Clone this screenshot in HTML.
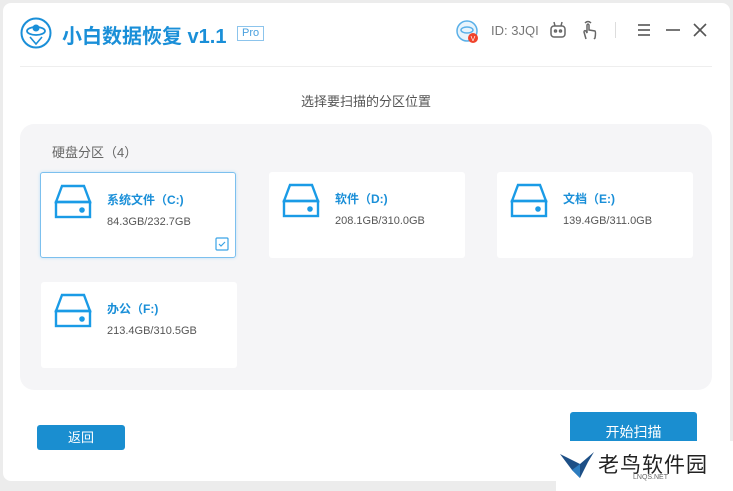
<!DOCTYPE html>
<html><head><meta charset="utf-8"><style>
*{margin:0;padding:0;box-sizing:border-box}
body{width:733px;height:491px;background:#ececec;font-family:"Liberation Sans","Noto Sans CJK SC",sans-serif;position:relative;overflow:hidden}
.win{position:absolute;left:3px;top:3px;width:727px;height:478px;background:#fff;border-radius:8px}
.abs{position:absolute}
.sep{left:20px;top:66px;width:692px;height:1px;background:#eee}
.title{left:62px;top:20px;font-size:20px;font-weight:bold;color:#1a8fd8;white-space:nowrap}
.pro{left:237px;top:26px;border:1px solid #8cc4ec;color:#4aa0de;font-size:11px;line-height:11px;padding:1px 4px}
.panel{left:20px;top:124px;width:692px;height:266px;background:#f5f5f7;border-radius:14px}
.card{position:absolute;width:196px;height:86px;background:#fff;border-radius:3px}
.card.sel{border:1px solid #7cc0ee;box-shadow:0 0 3px #bde0f7}
.card svg{position:absolute;left:13px;top:11px}
.card .n{position:absolute;left:66px;top:18px;font-size:12px;font-weight:bold;color:#1a8fd8;white-space:nowrap}
.card .s{position:absolute;left:66px;top:43px;font-size:11px;color:#555}
.btn{background:#1a8ed0;color:#fff;font-size:13px;text-align:center;border-radius:3px}
</style></head><body>
<div class="win"></div>
<svg class="abs" style="left:20px;top:17px" width="32" height="32" viewBox="0 0 32 32"><circle cx="16" cy="16" r="14.5" fill="#fff" stroke="#1a8fd8" stroke-width="2"/><ellipse cx="16" cy="14" rx="9" ry="4" fill="none" stroke="#1a8fd8" stroke-width="1.8"/><circle cx="16" cy="11" r="3.5" fill="#1a8fd8"/><path d="M10 20 L16 27 L22 20" fill="none" stroke="#1a8fd8" stroke-width="1.6"/></svg>
<div class="abs title">小白数据恢复&nbsp;v1.1</div>
<div class="abs pro">Pro</div>
<svg class="abs" style="left:455px;top:19px" width="30" height="28" viewBox="0 0 30 28"><circle cx="12" cy="12" r="10" fill="#e8f4fc" stroke="#5ab0e8" stroke-width="1.5"/><ellipse cx="12" cy="11" rx="6" ry="3" fill="none" stroke="#5ab0e8" stroke-width="1.5"/><circle cx="18" cy="19" r="5" fill="#f0442c"/><text x="18" y="22" font-size="7" fill="#fff" text-anchor="middle" font-family="Liberation Sans">V</text></svg>
<div class="abs" style="left:491px;top:23px;font-size:13px;color:#777">ID: 3JQI</div>
<svg class="abs" style="left:548px;top:20px" width="20" height="20" viewBox="0 0 20 20" fill="none" stroke="#666" stroke-width="1.5"><rect x="3" y="6" width="14" height="11" rx="3"/><line x1="6" y1="2" x2="7" y2="6"/><line x1="14" y1="2" x2="13" y2="6"/><circle cx="7.5" cy="11" r="1"/><circle cx="12.5" cy="11" r="1"/></svg>
<svg class="abs" style="left:580px;top:19px" width="20" height="22" viewBox="0 0 20 22" fill="none" stroke="#666" stroke-width="1.5"><path d="M6 20 L4 13 Q4 11 6 12 L7 14 L7 6 Q8 4 9 6 L9 11 L15 12 Q16 13 15 19 L14 20"/><path d="M5 4 Q8 1 11 4"/></svg>
<div class="abs" style="left:615px;top:22px;width:1px;height:16px;background:#ddd"></div>
<svg class="abs" style="left:636px;top:22px" width="80" height="16" viewBox="0 0 80 16" stroke="#555" stroke-width="1.6"><line x1="2" y1="3" x2="14" y2="3"/><line x1="2" y1="8" x2="14" y2="8"/><line x1="2" y1="13" x2="14" y2="13"/><line x1="30" y1="8" x2="44" y2="8"/><line x1="58" y1="2" x2="70" y2="14"/><line x1="70" y1="2" x2="58" y2="14"/></svg>
<div class="abs sep"></div>
<div class="abs" style="left:301px;top:91px;font-size:13px;color:#555">选择要扫描的分区位置</div>
<div class="abs panel"></div>
<div class="abs" style="left:52px;top:142px;font-size:13px;color:#666">硬盘分区（4）</div>
<div class="card sel" style="left:40px;top:172px"><svg width="38" height="36" viewBox="0 0 38 36" fill="none" stroke="#1a9be6" stroke-width="2.4"><path d="M8 2 L30 2 L36 18 L2 18 Z"/><rect x="2" y="18" width="34" height="15"/><circle cx="28" cy="26" r="1.6" fill="#1a9be6"/></svg><div class="n">系统文件（C:)</div><div class="s">84.3GB/232.7GB</div>
<svg style="left:174px;top:64px" width="14" height="14" viewBox="0 0 14 14" fill="none" stroke="#3aa3e6" stroke-width="1.2"><rect x="1" y="1" width="12" height="12" rx="1"/><path d="M4 7 L6 9 L10 5"/></svg></div>
<div class="card" style="left:269px;top:172px"><svg width="38" height="36" viewBox="0 0 38 36" fill="none" stroke="#1a9be6" stroke-width="2.4"><path d="M8 2 L30 2 L36 18 L2 18 Z"/><rect x="2" y="18" width="34" height="15"/><circle cx="28" cy="26" r="1.6" fill="#1a9be6"/></svg><div class="n">软件（D:)</div><div class="s">208.1GB/310.0GB</div></div>
<div class="card" style="left:497px;top:172px"><svg width="38" height="36" viewBox="0 0 38 36" fill="none" stroke="#1a9be6" stroke-width="2.4"><path d="M8 2 L30 2 L36 18 L2 18 Z"/><rect x="2" y="18" width="34" height="15"/><circle cx="28" cy="26" r="1.6" fill="#1a9be6"/></svg><div class="n">文档（E:)</div><div class="s">139.4GB/311.0GB</div></div>
<div class="card" style="left:41px;top:282px"><svg width="38" height="36" viewBox="0 0 38 36" fill="none" stroke="#1a9be6" stroke-width="2.4"><path d="M8 2 L30 2 L36 18 L2 18 Z"/><rect x="2" y="18" width="34" height="15"/><circle cx="28" cy="26" r="1.6" fill="#1a9be6"/></svg><div class="n">办公（F:)</div><div class="s">213.4GB/310.5GB</div></div>
<div class="abs btn" style="left:37px;top:425px;width:88px;height:25px;line-height:25px">返回</div>
<div class="abs btn" style="left:570px;top:412px;width:127px;height:40px;line-height:40px;font-size:14px">开始扫描</div>
<div class="abs" style="left:556px;top:441px;width:177px;height:50px;background:#fff"></div>
<svg class="abs" style="left:558px;top:448px" width="40" height="34" viewBox="0 0 40 34"><path d="M2 6 L22 16 L36 4 L30 14 L22 30 L14 22 Z" fill="#1d4f86"/><path d="M14 22 L22 16 L22 30 Z" fill="#2d7dc0"/></svg>
<div class="abs" style="left:598px;top:449px;font-size:21px;color:#222;letter-spacing:1px">老鸟软件园</div>
<div class="abs" style="left:633px;top:474px;font-size:7px;color:#666">LNQS.NET</div>
</body></html>
